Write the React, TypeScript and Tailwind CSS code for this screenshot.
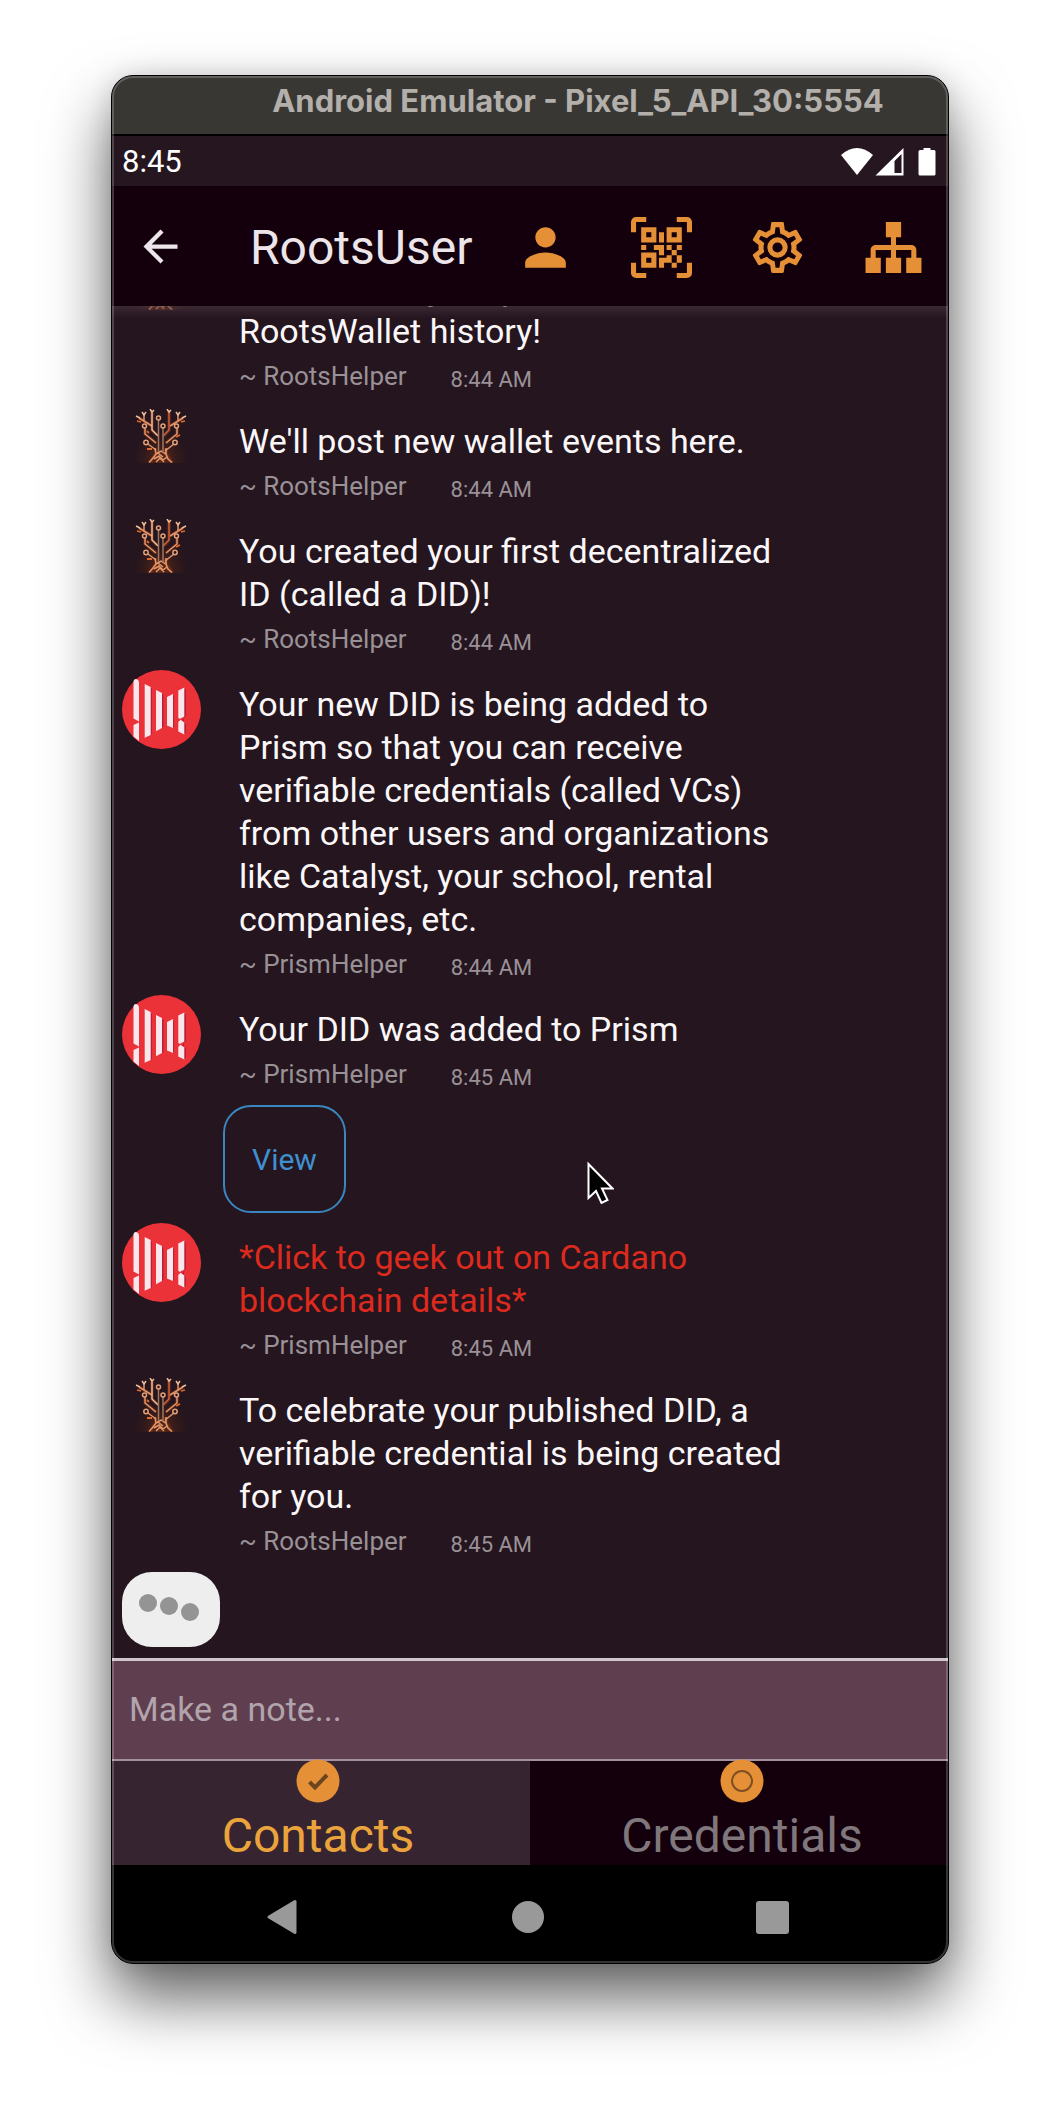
import React from "react";
import { MdArrowBack, MdPerson } from "react-icons/md";

type Sender = "RootsHelper" | "PrismHelper";

interface Message {
  sender: Sender;
  text: string;
  time: string;
  alert?: boolean;
  action?: string;
}

const messages: Message[] = [
  { sender: "RootsHelper", text: "Welcome to your personal RootsWallet history!", time: "8:44 AM" },
  { sender: "RootsHelper", text: "We'll post new wallet events here.", time: "8:44 AM" },
  { sender: "RootsHelper", text: "You created your first decentralized ID (called a DID)!", time: "8:44 AM" },
  {
    sender: "PrismHelper",
    text: "Your new DID is being added to Prism so that you can receive verifiable credentials (called VCs) from other users and organizations like Catalyst, your school, rental companies, etc.",
    time: "8:44 AM",
  },
  { sender: "PrismHelper", text: "Your DID was added to Prism", time: "8:45 AM", action: "View" },
  { sender: "PrismHelper", text: "*Click to geek out on Cardano blockchain details*", time: "8:45 AM", alert: true },
  {
    sender: "RootsHelper",
    text: "To celebrate your published DID, a verifiable credential is being created for you.",
    time: "8:45 AM",
  },
];

const QR_SCAN =
  "M4,4H10V10H4V4M20,4V10H14V4H20M14,15H16V13H14V11H16V13H18V11H20V13H18V15H20V18H18V20H16V18H13V20H11V16H14V15M16,15V18H18V15H16M4,20V14H10V20H4M6,6V8H8V6H6M16,6V8H18V6H16M6,16V18H8V16H6M4,11H6V13H4V11M9,11H13V15H11V13H9V11M11,6H13V10H11V6M2,2V6H0V2A2,2 0 0,1 2,0H6V2H2M22,0A2,2 0 0,1 24,2V6H22V2H18V0H22M2,18V22H6V24H2A2,2 0 0,1 0,22V18H2M22,22V18H24V22A2,2 0 0,1 22,24H18V22H22Z";
const COG =
  "M12,8A4,4 0 0,1 16,12A4,4 0 0,1 12,16A4,4 0 0,1 8,12A4,4 0 0,1 12,8M12,10A2,2 0 0,0 10,12A2,2 0 0,0 12,14A2,2 0 0,0 14,12A2,2 0 0,0 12,10M10,22C9.75,22 9.54,21.82 9.5,21.58L9.13,18.93C8.5,18.68 7.96,18.34 7.44,17.94L4.95,18.95C4.73,19.03 4.46,18.95 4.34,18.73L2.34,15.27C2.21,15.05 2.27,14.78 2.46,14.63L4.57,12.97L4.5,12L4.57,11L2.46,9.37C2.27,9.22 2.21,8.95 2.34,8.73L4.34,5.27C4.46,5.05 4.73,4.96 4.95,5.05L7.44,6.05C7.96,5.66 8.5,5.32 9.13,5.07L9.5,2.42C9.54,2.18 9.75,2 10,2H14C14.25,2 14.46,2.18 14.5,2.42L14.87,5.07C15.5,5.32 16.04,5.66 16.56,6.05L19.05,5.05C19.27,4.96 19.54,5.05 19.66,5.27L21.66,8.73C21.79,8.95 21.73,9.22 21.54,9.37L19.43,11L19.5,12L19.43,13L21.54,14.63C21.73,14.78 21.79,15.05 21.66,15.27L19.66,18.73C19.54,18.95 19.27,19.04 19.05,18.95L16.56,17.95C16.04,18.34 15.5,18.68 14.87,18.93L14.5,21.58C14.46,21.82 14.25,22 14,22H10M11.25,4L10.88,6.61C9.68,6.86 8.62,7.5 7.85,8.39L5.44,7.35L4.69,8.65L6.8,10.2C6.4,11.37 6.4,12.64 6.8,13.8L4.68,15.36L5.43,16.66L7.86,15.62C8.63,16.5 9.68,17.14 10.87,17.38L11.24,20H12.76L13.13,17.39C14.32,17.14 15.37,16.5 16.14,15.62L18.57,16.66L19.32,15.36L17.2,13.81C17.6,12.64 17.6,11.37 17.2,10.2L19.31,8.65L18.56,7.35L16.15,8.39C15.38,7.5 14.32,6.86 13.12,6.62L12.75,4H11.25Z";
const SITEMAP =
  "M9,2V8H11V11H5C3.89,11 3,11.89 3,13V16H1V22H7V16H5V13H11V16H9V22H15V16H13V13H19V16H17V22H23V16H21V13C21,11.89 20.11,11 19,11H13V8H15V2H9Z";

function HeaderIcon({ label, path }: { label: string; path: string }) {
  return (
    <button type="button" aria-label={label}>
      <svg viewBox="0 0 24 24" className="size-[61px]" fill="currentColor" aria-hidden="true">
        <path d={path} />
      </svg>
    </button>
  );
}

function TreeAvatar() {
  return (
    <svg viewBox="0 0 54 54" className="ml-3 mt-0.5 size-[54px]" fill="none" aria-hidden="true">
      <defs>
        <radialGradient id="glow" cx="0.5" cy="0.92" r="0.55">
          <stop offset="0" stopColor="#8a3a10" stopOpacity="0.6" />
          <stop offset="1" stopColor="#3a1a14" stopOpacity="0" />
        </radialGradient>
      </defs>
      <rect width="54" height="54" fill="url(#glow)" />
      <g stroke="#8c3a17" strokeWidth="3.5" opacity="0.5">
        <path d="M18 2V21L23 26M35 2V21L30 27M11 19V25L22 34M43 19V25L32 34M5 9L18 17M49 9L36 17M21 39L22 45L16 54M32 39L32 45L38 54" />
      </g>
      <g stroke="#e3966a" strokeWidth="1.5">
        <path d="M11 19V25L22 34M43 19V25L32 34M14 35L22 41M40 35L31 42M5 9L18 17M49 9L36 17M10 5V12M44 5V12" />
        <path d="M35 3V21L29 27" stroke="#c9623a" />
        <path d="M21 39L22 45L19 49L15 53.5M32 39L32 45L34 50L38 53.5M22 45L27 42L32 45M20 50L25 47L29 51L33 48M22 53L26 49L30 53M24 44L29 48" />
      </g>
      <g stroke="#efbf97" strokeWidth="1.5">
        <path d="M18 2V21L24 27M16 0L18 3L20 1M33 0L35 3L37 1M8 3L10 6L12 3M42 3L44 6L46 3M2 7L6 9M52 7L48 9" />
      </g>
      <path d="M24.5 11V43M29 18V44" stroke="#a1775f" strokeWidth="1.5" />
      <g stroke="#e6a077" strokeWidth="1.5">
        <circle cx="24.5" cy="9" r="2" />
        <circle cx="29" cy="17" r="2" />
        <circle cx="10.5" cy="17" r="2" />
        <circle cx="42.5" cy="17" r="2" />
        <circle cx="12" cy="33.5" r="2.2" />
        <circle cx="41" cy="33.5" r="2.2" />
      </g>
      <path d="M42 28L46 26M13 22L15 24M13 40H18M3 12L7 13M47 13L51 12" stroke="#dd6a2b" strokeWidth="1.8" />
    </svg>
  );
}

function PrismAvatar() {
  return (
    <svg viewBox="0 0 79 79" className="size-[79px]" aria-hidden="true">
      <circle cx="39.5" cy="39.5" r="39.5" fill="#ea3238" />
      <g fill="#b81f3a">
        <path d="M28 16.5L30 19V64L28 65.5ZM39.5 23L41.5 25V57L39.5 58ZM50 24L52 26V57L50 58ZM62 18L64 20V46L60 50L64 54V63L62 64Z" />
      </g>
      <g fill="#fbe6eb">
        <path d="M11.5 12Q11.5 9 14 9Q17 9.500 17 13V51.5L11.5 48.5Z" />
        <path d="M11.5 55L17 52.5V71L11.5 66.5Z" />
        <path d="M22.7 14L28.7 17V65L22.7 67.8Z" />
        <path d="M34 20L40 23V58L34 61.3Z" />
        <path d="M45 27L51 24V58L45 55.5Z" />
        <path d="M56.3 20.5L62.3 17.5V46.5L57.5 49L62.3 52.5V64.5L56.3 61.5V52L58.5 49.5L56.3 48Z" />
      </g>
      <path d="M56 48.5L60 49.5L56 51Z" fill="#ea3238" />
    </svg>
  );
}

function MouseCursor() {
  return (
    <svg viewBox="0 0 27 44" className="absolute left-[475px] top-14 h-11 w-[27px]" aria-hidden="true">
      <path d="M1.5 3V37L9 30L14.5 42L20.5 39L15 27.5H25.5Z" fill="#000" stroke="#fff" strokeWidth="2" strokeLinejoin="miter" />
    </svg>
  );
}

function MessageRow({ message }: { message: Message }) {
  return (
    <li className="shrink-0">
      <article className="flex gap-[38px] pl-2.5">
        <div className="h-0 w-[79px] shrink-0">
          {message.sender === "RootsHelper" ? <TreeAvatar /> : <PrismAvatar />}
        </div>
        <div className="max-w-[564px] pb-[11px] pt-[13px]">
          <p className={message.alert ? "text-[34px] leading-[43px] text-[#dd2a1e]" : "text-[34px] leading-[43px] text-[#fbf7f9]"}>
            {message.text}
          </p>
          <footer className="mt-[7px] flex gap-11 leading-8 text-[#9a9197]">
            <span className="text-[26px]">~ {message.sender}</span>
            <time className="pt-1 text-[22px]">{message.time}</time>
          </footer>
        </div>
      </article>
      {message.action && (
        <div className="relative mb-2.5 pl-[111px]">
          <button
            type="button"
            className="block h-[108px] w-[123px] rounded-[28px] border-2 border-[#3a86c0] text-[30px] text-[#3f90d0]"
          >
            {message.action}
          </button>
          <MouseCursor />
        </div>
      )}
    </li>
  );
}

function StatusBar() {
  return (
    <div className="flex h-[50px] shrink-0 items-center justify-between bg-[#26161f] pl-2.5 pr-[11px] pt-0.5 text-white">
      <span className="text-[31px]">8:45</span>
      <svg viewBox="0 0 96 28" className="h-7 w-24" fill="#fff" aria-label="Wi-Fi, mobile signal and battery">
        <path d="M0 7Q16 -7 32 7L16 27Z" />
        <path fillRule="evenodd" d="M34.5 27.5L62.5 0V27.5ZM53.5 13V25H60.5V6Z" />
        <path d="M78 3Q78 2 79 2H82.5V0H89.5V2H93Q94.5 2 94.5 3.5V26Q94.5 27.5 93 27.5H79Q77.5 27.5 77.5 26V3Z" />
      </svg>
    </div>
  );
}

function Tab({ label, active }: { label: string; active?: boolean }) {
  return (
    <button
      type="button"
      role="tab"
      aria-selected={!!active}
      className={
        active
          ? "flex flex-1 flex-col items-center bg-[#362530] pr-1.5 text-[#eba43c]"
          : "flex flex-1 flex-col items-center bg-[#14000c] pl-1.5 text-[#7f777c]"
      }
    >
      <svg viewBox="0 0 44 44" className="relative -mt-0.5 size-11" fill="none" aria-hidden="true">
        <circle cx="22" cy="22" r="21.5" fill="#e59037" />
        {active ? (
          <path d="M13.5 23L19 28.5L31 16" stroke="#6b4520" strokeWidth="4" />
        ) : (
          <circle cx="22" cy="22" r="10" stroke="#7d4f22" strokeWidth="2" />
        )}
      </svg>
      <span className="mt-[5px] text-[48px] leading-[56px]">{label}</span>
    </button>
  );
}

export default function App() {
  return (
    <div className="flex h-screen flex-col overflow-hidden bg-white px-[111px] pb-[148px] pt-[75px] font-[Roboto,sans-serif]">
      <main className="relative flex min-h-0 flex-1 flex-col rounded-[22px] shadow-[0_34px_64px_rgba(0,0,0,0.62),0_0_24px_rgba(0,0,0,0.12)]">
        <div className="flex min-h-0 flex-1 flex-col overflow-hidden rounded-[22px] border border-black bg-[#24151e]">
          <div className="flex h-[60px] shrink-0 items-center justify-center border-b-2 border-black bg-[#393734] pb-2 pl-24 font-[Inter,sans-serif] text-[31px] font-bold text-[#b3afab]">
            <h1 className="whitespace-nowrap">Android Emulator - Pixel_5_API_30:5554</h1>
          </div>
          <StatusBar />
          <header className="flex h-[120px] shrink-0 items-center bg-[#14000c] pl-[23px] pr-6 text-[#e59037]">
            <button type="button" aria-label="Back" className="text-[#ece6ea]">
              <MdArrowBack className="size-[51px]" />
            </button>
            <h2 className="ml-16 pt-1 text-[48px] leading-[56px] text-[#ece6ea]">RootsUser</h2>
            <nav aria-label="Wallet tools" className="ml-auto flex gap-[55px] pt-0.5">
              <button type="button" aria-label="Profile">
                <MdPerson className="size-[61px]" />
              </button>
              <HeaderIcon label="Scan QR code" path={QR_SCAN} />
              <HeaderIcon label="Settings" path={COG} />
              <HeaderIcon label="Relationships" path={SITEMAP} />
            </nav>
          </header>
          <section
            aria-label="Conversation"
            className="relative flex min-h-0 flex-1 flex-col justify-end overflow-hidden pb-[11px]"
          >
            <ul className="flex flex-col">
              {messages.map((message) => (
                <MessageRow key={message.text} message={message} />
              ))}
            </ul>
            <div
              role="status"
              aria-label="Typing"
              className="ml-2.5 flex h-[75px] w-[98px] shrink-0 items-start justify-center gap-[3px] rounded-[30px] bg-[#eeeeee] pr-1 pt-[22px]"
            >
              <span className="size-[18px] rounded-full bg-[#949494]" />
              <span className="mt-[3px] size-[18px] rounded-full bg-[#949494]" />
              <span className="mt-[9px] size-[18px] rounded-full bg-[#949494]" />
            </div>
            <div className="absolute inset-x-0 top-0 h-3 bg-gradient-to-b from-[#4a3542]/60 to-transparent" />
          </section>
          <input
            type="text"
            aria-label="Note"
            placeholder="Make a note..."
            className="h-[103px] w-full shrink-0 border-b-2 border-t-3 border-b-[#a58f9b] border-t-[#cfc5ca] bg-[#5f3f4f] pb-0.5 pl-[17px] text-[34px] text-white outline-none placeholder:text-[#b1a4ac]"
          />
          <div role="tablist" className="flex h-[104px] shrink-0">
            <Tab label="Contacts" active />
            <Tab label="Credentials" />
          </div>
          <nav aria-label="System" className="flex h-[98px] shrink-0 items-center justify-center gap-[212px] bg-black pr-[5px] pt-1.5">
            <button type="button" aria-label="Back">
              <svg viewBox="0 0 34 36" className="h-9 w-[34px]" aria-hidden="true">
                <path d="M3 18L29 2.5V33.5Z" fill="#999" stroke="#999" strokeWidth="3" strokeLinejoin="round" />
              </svg>
            </button>
            <button type="button" aria-label="Home" className="size-8 rounded-full bg-[#999]" />
            <button type="button" aria-label="Overview" className="size-[33px] rounded-[3px] bg-[#999]" />
          </nav>
        </div>
        <div className="pointer-events-none absolute inset-px rounded-[21px] border-2 border-white/20" />
      </main>
    </div>
  );
}
